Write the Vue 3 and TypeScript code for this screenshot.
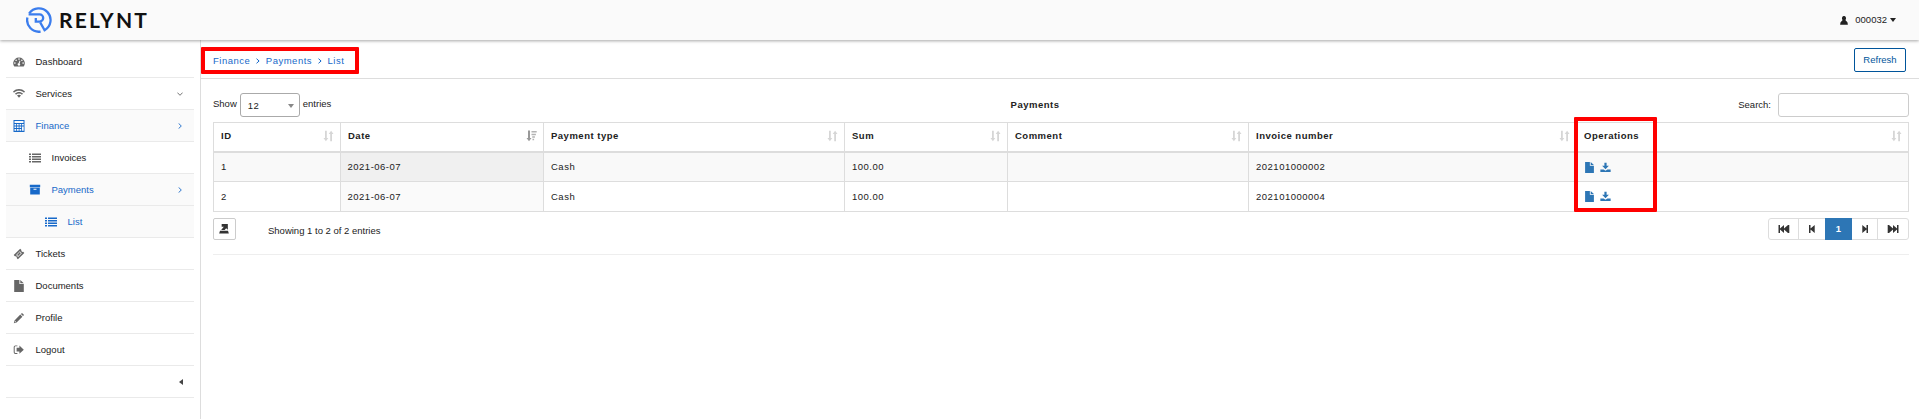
<script setup lang="ts">
interface NavItem {
  label: string
  icon: string
  level: number
  active?: boolean
  arrow?: 'down' | 'right'
}

interface Column {
  title: string
  width: number
  sorted?: boolean
}

interface Payment {
  id: number
  date: string
  type: string
  sum: string
  comment: string
  invoice: string
}

const navItems: NavItem[] = [
  { label: 'Dashboard', icon: 'gauge', level: 0 },
  { label: 'Services', icon: 'wifi', level: 0, arrow: 'down' },
  { label: 'Finance', icon: 'calculator', level: 0, active: true, arrow: 'right' },
  { label: 'Invoices', icon: 'list', level: 1 },
  { label: 'Payments', icon: 'archive', level: 1, active: true, arrow: 'right' },
  { label: 'List', icon: 'list', level: 2, active: true },
  { label: 'Tickets', icon: 'ticket', level: 0 },
  { label: 'Documents', icon: 'file', level: 0 },
  { label: 'Profile', icon: 'pencil', level: 0 },
  { label: 'Logout', icon: 'signout', level: 0 },
]

const icons: Record<string, string> = {
  gauge:
    'M1.3 10.6A5.8 5.8 0 1 1 10.7 10.6ZM6 2.3a.8.8 0 1 0 0 1.6a.8.8 0 1 0 0-1.6ZM3.1 3.5a.8.8 0 1 0 0 1.6a.8.8 0 1 0 0-1.6ZM1.9 6.3a.8.8 0 1 0 0 1.6a.8.8 0 1 0 0-1.6ZM10.1 6.3a.8.8 0 1 0 0 1.6a.8.8 0 1 0 0-1.6ZM8.9 3.5a.8.8 0 1 0 0 1.6a.8.8 0 1 0 0-1.6ZM6.6 4.6L5.6 7.3a1.2 1.2 0 1 0 1 .2L7.4 4.9Z',
  wifi:
    'M0 3.5C3.4.2 8.6.2 12 3.5L11 4.7C8.2 2.1 3.8 2.1 1 4.7ZM2 5.5C4.3 3.4 7.7 3.4 10 5.5L9 6.7C7.3 5.2 4.7 5.2 3 6.7ZM4 7.5C5.2 6.5 6.8 6.5 8 7.5L6 9.7Z',
  calculator:
    'M.5 0H11.5V12H.5ZM1.5 1V3H10.5V1ZM1.5 4V5.6H3.2V4ZM4 4V5.6H5.7V4ZM6.5 4V5.6H8.2V4ZM9 4V5.6H10.7V4ZM1.5 6.5V8.1H3.2V6.5ZM4 6.5V8.1H5.7V6.5ZM6.5 6.5V8.1H8.2V6.5ZM1.5 9V10.8H3.2V9ZM4 9V10.8H5.7V9ZM6.5 9V10.8H8.2V9ZM9 6.5V10.8H10.7V6.5Z',
  list:
    'M0 1.5H2V3H0ZM3 1.5H12V3H3ZM0 4H2V5.5H0ZM3 4H12V5.5H3ZM0 6.5H2V8H0ZM3 6.5H12V8H3ZM0 9H2V10.5H0ZM3 9H12V10.5H3Z',
  archive: 'M.8.8H11.2V3.3H.8ZM1.2 3.8H10.8V10.6H1.2ZM4.5 4.8V5.8H7.5V4.8Z',
  ticket:
    'M7.2.8L8.4 2a1.4 1.4 0 0 0 1.8 1.8L11.3 5L4.9 11.3L3.7 10.1A1.4 1.4 0 0 0 1.9 8.3L.7 7.1ZM6.8 3.2L3.1 6.9L5.1 8.9L8.8 5.2ZM6.8 4.1L7.9 5.2L5.1 8L4 6.9Z',
  file: 'M1.2 0H6.4V4.1H10.8V12H1.2ZM7.3 0L10.8 3.3H7.3Z',
  pencil: 'M9 .9L11.1 3L10 4.1L7.9 2ZM7.3 2.6L9.4 4.7L3.6 10.5L.8 11.2L1.5 8.4ZM2.1 8.9L1.7 10.3L3.1 9.9Z',
  signout:
    'M4.4 1.5H2.3A1.6 1.6 0 0 0 .7 3.1V8.3A1.6 1.6 0 0 0 2.3 9.9H4.4V9.1H2.5A.8.8 0 0 1 1.7 8.3V3.1A.8.8 0 0 1 2.5 2.3H4.4ZM6.4 1.6L10.8 5.7L6.4 9.8V7.6H3.6V3.8H6.4Z',
  user: 'M6 0A2.9 3.1 0 0 1 8.4 5Q8.2 6.6 9.8 7Q11.8 7.8 11.8 11.5H.2Q.2 7.8 2.2 7Q3.8 6.6 3.6 5A2.9 3.1 0 0 1 6 0Z',
  download: 'M4.8.8H7.2V4.2H9.7L6 7.8L2.3 4.2H4.8ZM.4 8.2H4L6 9.5L8 8.2H11.6V11H.4Z',
  export: 'M3.2 0H10.6V7L8.6 5L6.8 7.2H2.6L5.8 3.4H3.2ZM1.2 8H10.8L11.8 11.5H.2Z',
}

const columns: Column[] = [
  { title: 'ID', width: 127 },
  { title: 'Date', width: 203, sorted: true },
  { title: 'Payment type', width: 301 },
  { title: 'Sum', width: 163 },
  { title: 'Comment', width: 241 },
  { title: 'Invoice number', width: 328 },
  { title: 'Operations', width: 332 },
]

const payments: Payment[] = [
  { id: 1, date: '2021-06-07', type: 'Cash', sum: '100.00', comment: '', invoice: '202101000002' },
  { id: 2, date: '2021-06-07', type: 'Cash', sum: '100.00', comment: '', invoice: '202101000004' },
]

const crumbs = ['Finance', 'Payments', 'List']
</script>

<template>
  <div class="page">
    <header class="topbar">
      <div class="brand">
        <svg class="brand-mark" viewBox="0 0 26 26" fill="none" stroke="#3b7ded" stroke-width="2.3">
          <path d="M3.2 6.4A11.7 11.7 0 1 1 18.6 23.2L14.2 15.4" />
          <path d="M1.4 10.6A11.7 11.7 0 0 0 14.6 24.6" />
          <path d="M2.6 7.4H13.6a3.6 3.6 0 0 1 0 7.2H9.8V11" />
        </svg>
        <span class="brand-name">RELYNT</span>
      </div>
      <div class="account">
        <svg class="user-icon" viewBox="0 0 12 12" preserveAspectRatio="none"><path :d="icons.user" /></svg>
        <span>000032</span>
        <i class="caret"></i>
      </div>
    </header>

    <div class="body">
      <nav class="sidebar">
        <a
          v-for="item in navItems"
          :key="item.label"
          class="nav-item"
          :class="['level-' + item.level, { active: item.active }]"
        >
          <svg class="nav-icon" viewBox="0 0 12 12"><path fill-rule="evenodd" :d="icons[item.icon]" /></svg>
          <span class="nav-label">{{ item.label }}</span>
          <svg v-if="item.arrow" class="chevron" :class="item.arrow" viewBox="0 0 6 6">
            <path d="M1.6.4L4.3 3L1.6 5.6" />
          </svg>
        </a>
        <div class="nav-item collapse"><i></i></div>
      </nav>

      <main class="content">
        <div class="crumb-bar">
          <div class="crumbs">
            <template v-for="(crumb, i) in crumbs" :key="crumb">
              <svg v-if="i" class="crumb-sep" viewBox="0 0 6 6"><path d="M1.5.7L4.1 3L1.5 5.3" /></svg>
              <a>{{ crumb }}</a>
            </template>
          </div>
          <button class="refresh">Refresh</button>
        </div>

        <section class="panel">
          <div class="tools">
            <div class="length">
              <span>Show</span>
              <div class="select"><span>12</span><i></i></div>
              <span>entries</span>
            </div>
            <strong>Payments</strong>
            <label class="search">Search:<input type="text" /></label>
          </div>

          <div class="table-wrap">
            <table>
              <colgroup>
                <col v-for="c in columns" :key="c.title" :style="{ width: c.width + 'px' }" />
              </colgroup>
              <thead>
                <tr>
                  <th v-for="c in columns" :key="c.title">
                    <div class="head-cell">
                      <span>{{ c.title }}</span>
                      <svg v-if="c.sorted" class="sort sorted" viewBox="0 0 11 12">
                        <path d="M2 .5H4V8H5.5L3 11.3L.5 8H2Z" />
                        <path d="M5.5 1H10.7V2.5H5.5ZM5.5 3.7H9.9V5.2H5.5ZM6.2 6.3H8.9V7.7H6.2ZM6.5 8.8H8.1V10.2H6.5Z" opacity=".75" />
                      </svg>
                      <svg v-else class="sort" viewBox="0 0 11 12">
                        <path d="M2 .8H3.8V8H5.3L2.9 11.2L.5 8H2ZM7.2 11.2H9V4H10.5L8.1.8L5.7 4H7.2Z" />
                      </svg>
                    </div>
                  </th>
                </tr>
              </thead>
              <tbody>
                <tr v-for="p in payments" :key="p.id">
                  <td>{{ p.id }}</td>
                  <td class="date">{{ p.date }}</td>
                  <td>{{ p.type }}</td>
                  <td>{{ p.sum }}</td>
                  <td>{{ p.comment }}</td>
                  <td>{{ p.invoice }}</td>
                  <td>
                    <div class="ops">
                      <svg viewBox="0 0 12 12"><path :d="icons.file" /></svg>
                      <svg viewBox="0 0 12 12"><path :d="icons.download" /></svg>
                    </div>
                  </td>
                </tr>
              </tbody>
            </table>
            <div class="mark-ops"></div>
          </div>

          <div class="table-foot">
            <button class="export"><svg viewBox="0 0 12 12"><path :d="icons.export" /></svg></button>
            <span class="info">Showing 1 to 2 of 2 entries</span>
            <div class="pager">
              <a class="first"><svg viewBox="0 0 12 10"><path d="M.5 1H2V4.6L6 1V4.6L10 1H11.3V9H10L6 5.4V9L2 5.4V9H.5Z" /></svg></a>
              <a class="prev"><svg viewBox="0 0 12 10"><path d="M3 1H4.5V4.6L8.7 1V9L4.5 5.4V9H3Z" /></svg></a>
              <a class="current">1</a>
              <a class="next"><svg viewBox="0 0 12 10"><path d="M9 1H7.5V4.6L3.3 1V9L7.5 5.4V9H9Z" /></svg></a>
              <a class="last"><svg viewBox="0 0 12 10"><path d="M11.5 1H10V4.6L6 1V4.6L2 1H.7V9H2L6 5.4V9L10 5.4V9H11.5Z" /></svg></a>
            </div>
          </div>
        </section>
      </main>
    </div>
  </div>
</template>

<style>
body {
  margin: 0;
  overflow: hidden;
}
</style>

<style scoped>
.page {
  height: 419px;
  display: flex;
  flex-direction: column;
  background: #fff;
  color: #222;
  font: 9.5px/14px "Liberation Sans", Arial, sans-serif;
}
.page * {
  box-sizing: border-box;
}
svg {
  display: block;
  fill: currentColor;
}
.topbar {
  height: 40px;
  flex: none;
  display: flex;
  justify-content: space-between;
  align-items: center;
  padding: 0 23px 0 26px;
  background: #fafafa;
  box-shadow: 0 1px 3px rgba(0, 0, 0, 0.35);
  position: relative;
}
.brand {
  display: flex;
  align-items: center;
  gap: 7px;
}
.brand-mark {
  width: 26px;
  height: 26px;
  fill: none;
}
.brand-name {
  font: 700 21px/24px Lato, sans-serif;
  letter-spacing: 2.2px;
  color: #111;
}
.account {
  display: flex;
  align-items: center;
}
.user-icon {
  width: 8px;
  height: 9px;
  margin-right: 7px;
}
.caret {
  margin-left: 3px;
  border: 3px solid transparent;
  border-top: 4px solid #222;
  border-bottom: 0;
}
.body {
  flex: 1;
  display: flex;
}
.sidebar {
  width: 201px;
  flex: none;
  border-right: 1px solid #ddd;
  padding: 6px 6px 0;
}
.nav-item {
  height: 32px;
  display: flex;
  align-items: center;
  border-bottom: 1px solid #eaeaea;
  padding: 0 10px 0 7px;
  color: #222;
}
.nav-icon {
  width: 12px;
  height: 12px;
  margin-right: 10.5px;
  color: #666;
}
.nav-label {
  flex: 1;
}
.level-1 {
  padding-left: 23px;
}
.level-2 {
  padding-left: 39px;
}
.nav-item.active,
.active .nav-icon {
  color: #1769c9;
}
.nav-item.active {
  background: #fafafa;
}
.chevron {
  width: 6px;
  height: 6px;
  margin-right: 1px;
  fill: none;
  stroke: currentColor;
  stroke-width: 0.9;
}
.chevron.down {
  transform: rotate(90deg);
  color: #666;
}
.collapse {
  justify-content: flex-end;
  padding-right: 11px;
}
.collapse i {
  border: 3px solid transparent;
  border-right: 4px solid #444;
  border-left: 0;
}
.content {
  flex: 1;
  min-width: 0;
}
.crumb-bar {
  height: 39px;
  display: flex;
  justify-content: space-between;
  align-items: flex-start;
  border-bottom: 1px solid #ddd;
  padding: 7px 13px 0 0;
}
.crumbs {
  width: 158px;
  height: 27px;
  display: flex;
  align-items: center;
  padding: 0 8px;
  border: 4px solid #f00;
  border-radius: 1px;
  letter-spacing: 0.5px;
  color: #1769c9;
}
.crumb-sep {
  width: 6px;
  height: 6px;
  margin: 0 5px 0 4.5px;
  fill: none;
  stroke: currentColor;
}
.refresh {
  width: 52px;
  height: 24px;
  margin-top: 1px;
  padding: 0;
  border: 1px solid #00559b;
  border-radius: 2px;
  background: #fff;
  color: #00559b;
  font: inherit;
}
.panel {
  margin: 0 10px 0 12px;
  padding-top: 14px;
  border-bottom: 1px solid #eee;
}
.tools {
  height: 29px;
  display: grid;
  grid-template-columns: 1fr auto 1fr;
  align-items: start;
}
.tools strong {
  padding: 5px 52px 0 0;
  letter-spacing: 0.5px;
}
.length,
.search {
  display: flex;
}
.length > span {
  padding-top: 4px;
}
.select {
  width: 60px;
  height: 24px;
  margin: 0 3px;
  padding: 2px 5px 0 7px;
  display: flex;
  justify-content: space-between;
  align-items: center;
  border: 1px solid #aaa;
  border-radius: 3px;
  letter-spacing: 0.4px;
}
.select i {
  border: 3px solid transparent;
  border-top: 4px solid #888;
  border-bottom: 0;
  margin-top: -1px;
}
.search {
  justify-content: flex-end;
  line-height: 24px;
}
.search input {
  width: 131px;
  height: 24px;
  margin: 0 0 0 7px;
  border: 1px solid #ccc;
  border-radius: 3px;
  background: #fff;
}
.table-wrap {
  position: relative;
}
table {
  width: 1695px;
  table-layout: fixed;
  border-collapse: collapse;
  letter-spacing: 0.5px;
}
th,
td {
  border: 1px solid #ddd;
  padding: 0 7px;
  text-align: left;
}
th {
  height: 29px;
  padding: 0 6px 2px 7px;
  border-bottom: 2px solid #ddd;
}
td {
  height: 30px;
}
tbody tr:first-child {
  background: #f9f9f9;
}
tbody tr:first-child td {
  padding-top: 1px;
}
.date {
  background: #fafafa;
}
tbody tr:first-child .date {
  background: #f0f0f0;
}
td.date {
  padding-left: 6.5px;
}
.head-cell {
  display: flex;
  justify-content: space-between;
  align-items: center;
}
.sort {
  width: 11px;
  height: 12px;
  color: #d6d6d6;
}
.sorted {
  color: #999;
}
.ops {
  display: flex;
  gap: 5px;
  color: #2d76b5;
}
.ops svg {
  width: 11px;
  height: 11px;
}
.mark-ops {
  position: absolute;
  left: 1361px;
  top: -5px;
  width: 83px;
  height: 95px;
  border: 4px solid #f00;
  border-radius: 1px;
}
.table-foot {
  height: 42px;
  padding-top: 6px;
  display: flex;
  align-items: flex-start;
}
.export {
  width: 23px;
  height: 22px;
  padding: 0 0 0 5px;
  border: 1px solid #ccc;
  border-radius: 2px;
  background: #fff;
  color: #333;
}
.export svg {
  width: 10px;
  height: 10px;
}
.info {
  margin: 6px auto 0 32px;
}
.pager {
  height: 22px;
  display: flex;
  border: 1px solid #ddd;
  border-radius: 3px;
  color: #333;
}
.pager a {
  width: 26px;
  display: flex;
  align-items: center;
  justify-content: center;
}
.pager svg {
  width: 12px;
  height: 10px;
}
.pager .first {
  width: 30px;
  border-right: 1px solid #ddd;
}
.pager .next {
  width: 25px;
}
.pager .last {
  width: 31px;
  border-left: 1px solid #ddd;
}
.pager .current {
  width: 27px;
  margin: -1px 0;
  background: #2d76b5;
  color: #fff;
  font-weight: 700;
}
</style>
